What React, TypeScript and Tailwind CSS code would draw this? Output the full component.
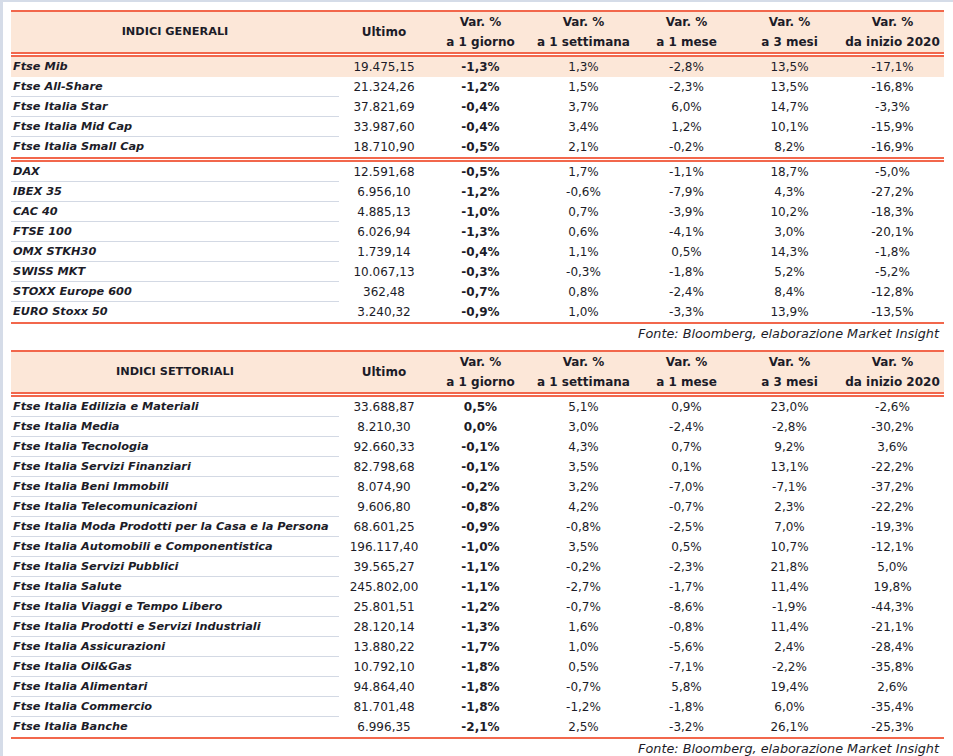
const FONT = { fontFamily: '"DejaVu Sans", "Open Sans", sans-serif' }

type Row = [string, string, string, string, string, string, string]

const generali: Row[][] = [
  [
    ['Ftse Mib', '19.475,15', '-1,3%', '1,3%', '-2,8%', '13,5%', '-17,1%'],
    ['Ftse All-Share', '21.324,26', '-1,2%', '1,5%', '-2,3%', '13,5%', '-16,8%'],
    ['Ftse Italia Star', '37.821,69', '-0,4%', '3,7%', '6,0%', '14,7%', '-3,3%'],
    ['Ftse Italia Mid Cap', '33.987,60', '-0,4%', '3,4%', '1,2%', '10,1%', '-15,9%'],
    ['Ftse Italia Small Cap', '18.710,90', '-0,5%', '2,1%', '-0,2%', '8,2%', '-16,9%'],
  ],
  [
    ['DAX', '12.591,68', '-0,5%', '1,7%', '-1,1%', '18,7%', '-5,0%'],
    ['IBEX 35', '6.956,10', '-1,2%', '-0,6%', '-7,9%', '4,3%', '-27,2%'],
    ['CAC 40', '4.885,13', '-1,0%', '0,7%', '-3,9%', '10,2%', '-18,3%'],
    ['FTSE 100', '6.026,94', '-1,3%', '0,6%', '-4,1%', '3,0%', '-20,1%'],
    ['OMX STKH30', '1.739,14', '-0,4%', '1,1%', '0,5%', '14,3%', '-1,8%'],
    ['SWISS MKT', '10.067,13', '-0,3%', '-0,3%', '-1,8%', '5,2%', '-5,2%'],
    ['STOXX Europe 600', '362,48', '-0,7%', '0,8%', '-2,4%', '8,4%', '-12,8%'],
    ['EURO Stoxx 50', '3.240,32', '-0,9%', '1,0%', '-3,3%', '13,9%', '-13,5%'],
  ],
]

const settoriali: Row[][] = [
  [
    ['Ftse Italia Edilizia e Materiali', '33.688,87', '0,5%', '5,1%', '0,9%', '23,0%', '-2,6%'],
    ['Ftse Italia Media', '8.210,30', '0,0%', '3,0%', '-2,4%', '-2,8%', '-30,2%'],
    ['Ftse Italia Tecnologia', '92.660,33', '-0,1%', '4,3%', '0,7%', '9,2%', '3,6%'],
    ['Ftse Italia Servizi Finanziari', '82.798,68', '-0,1%', '3,5%', '0,1%', '13,1%', '-22,2%'],
    ['Ftse Italia Beni Immobili', '8.074,90', '-0,2%', '3,2%', '-7,0%', '-7,1%', '-37,2%'],
    ['Ftse Italia Telecomunicazioni', '9.606,80', '-0,8%', '4,2%', '-0,7%', '2,3%', '-22,2%'],
    ['Ftse Italia Moda Prodotti per la Casa e la Persona', '68.601,25', '-0,9%', '-0,8%', '-2,5%', '7,0%', '-19,3%'],
    ['Ftse Italia Automobili e Componentistica', '196.117,40', '-1,0%', '3,5%', '0,5%', '10,7%', '-12,1%'],
    ['Ftse Italia Servizi Pubblici', '39.565,27', '-1,1%', '-0,2%', '-2,3%', '21,8%', '5,0%'],
    ['Ftse Italia Salute', '245.802,00', '-1,1%', '-2,7%', '-1,7%', '11,4%', '19,8%'],
    ['Ftse Italia Viaggi e Tempo Libero', '25.801,51', '-1,2%', '-0,7%', '-8,6%', '-1,9%', '-44,3%'],
    ['Ftse Italia Prodotti e Servizi Industriali', '28.120,14', '-1,3%', '1,6%', '-0,8%', '11,4%', '-21,1%'],
    ['Ftse Italia Assicurazioni', '13.880,22', '-1,7%', '1,0%', '-5,6%', '2,4%', '-28,4%'],
    ['Ftse Italia Oil&Gas', '10.792,10', '-1,8%', '0,5%', '-7,1%', '-2,2%', '-35,8%'],
    ['Ftse Italia Alimentari', '94.864,40', '-1,8%', '-0,7%', '5,8%', '19,4%', '2,6%'],
    ['Ftse Italia Commercio', '81.701,48', '-1,8%', '-1,2%', '-1,8%', '6,0%', '-35,4%'],
    ['Ftse Italia Banche', '6.996,35', '-2,1%', '2,5%', '-3,2%', '26,1%', '-25,3%'],
  ],
]

const periods = ['a 1 giorno', 'a 1 settimana', 'a 1 mese', 'a 3 mesi', 'da inizio 2020']

function DoubleLine() {
  return (
    <div>
      <div className="h-[2px] bg-[#f2674c]" />
      <div className="h-px bg-white" />
      <div className="h-[2px] bg-[#f2674c]" />
    </div>
  )
}

function DataRow({ row, last, highlight }: { row: Row; last: boolean; highlight: boolean }) {
  const [name, ultimo, giorno, ...rest] = row
  return (
    <div className={`flex h-[20px] items-center ${highlight ? 'bg-[#fce7d8]' : ''}`}>
      <div
        className={`w-[328px] h-full flex items-center pl-[2px] pt-px font-bold italic text-[11.3px] whitespace-nowrap ${
          last || highlight ? '' : 'border-b border-[#d3d9e4]'
        }`}
      >
        {name}
      </div>
      <div className="w-[90px] text-center">{ultimo}</div>
      <div className="w-[103px] text-center font-bold">{giorno}</div>
      {rest.map((v, i) => (
        <div key={i} className="w-[103px] text-center">
          {v}
        </div>
      ))}
    </div>
  )
}

function MarketTable({ title, groups }: { title: string; groups: Row[][] }) {
  return (
    <div className="w-[933px]">
      <div className="h-[2px] bg-[#f2674c]" />
      <div className="flex h-[40px] bg-[#fce7d8] font-bold">
        <div className="w-[328px] flex items-center justify-center text-[11.3px]">{title}</div>
        <div className="w-[90px] flex items-center justify-center">Ultimo</div>
        {periods.map((p) => (
          <div key={p} className="w-[103px] flex flex-col items-center justify-center leading-[20px] whitespace-nowrap">
            <span>Var. %</span>
            <span>{p}</span>
          </div>
        ))}
      </div>
      <DoubleLine />
      {groups.map((g, gi) => (
        <div key={gi}>
          {gi > 0 && <DoubleLine />}
          {g.map((r, ri) => (
            <DataRow
              key={r[0]}
              row={r}
              last={ri === g.length - 1}
              highlight={gi === 0 && ri === 0 && title === 'INDICI GENERALI'}
            />
          ))}
        </div>
      ))}
      <div className="h-[2px] bg-[#f2674c]" />
      <div className="h-[19px] flex items-center justify-end pr-[5px] italic text-[12.8px]">
        Fonte: Bloomberg, elaborazione Market Insight
      </div>
    </div>
  )
}

export default function App() {
  return (
    <div
      className="w-[953px] h-[756px] bg-white border-t-2 border-l-[3px] border-[#d5dce8] pl-[8px] pt-[8px] text-[12px] text-[#1c1c28]"
      style={FONT}
    >
      <MarketTable title="INDICI GENERALI" groups={generali} />
      <div className="h-[7px]" />
      <MarketTable title="INDICI SETTORIALI" groups={settoriali} />
    </div>
  )
}
